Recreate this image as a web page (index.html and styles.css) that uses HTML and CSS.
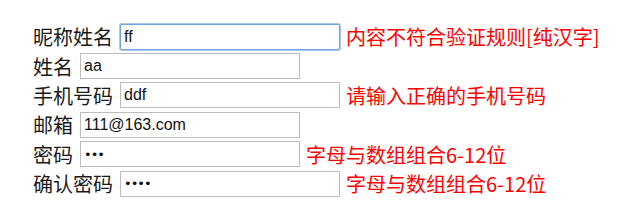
FILE: index.html
```html
<!doctype html>
<html lang="zh-CN">
  <head>
    <meta charset="UTF-8" />
    <title>注册表单</title>
    <link rel="stylesheet" href="styles.css">
  </head>
  <body>
    <form class="reg-form">
      <div class="row">
        <label for="nick">昵称姓名</label>
        <input type="text" id="nick" class="focused" value="ff" />
        <span class="err">内容不符合验证规则[纯汉字]</span>
      </div>
      <div class="row">
        <label for="name">姓名</label>
        <input type="text" id="name" value="aa" />
      </div>
      <div class="row">
        <label for="phone">手机号码</label>
        <input type="text" id="phone" value="ddf" />
        <span class="err">请输入正确的手机号码</span>
      </div>
      <div class="row">
        <label for="mail">邮箱</label>
        <input type="text" id="mail" value="111@163.com" />
      </div>
      <div class="row">
        <label for="pwd">密码</label>
        <input type="password" id="pwd" value="abc" />
        <span class="err">字母与数组组合6-12位</span>
      </div>
      <div class="row">
        <label for="pwd2">确认密码</label>
        <input type="password" id="pwd2" value="abcd" />
        <span class="err">字母与数组组合6-12位</span>
      </div>
    </form>
  </body>
</html>
```

FILE: styles.css
```css
body {
  margin: 0;
  background-color: #fff;
  font-family: "Noto Sans CJK SC", "Liberation Sans", sans-serif;
  color: #1a1a1a;
}

.reg-form {
  padding: 22px 0 0 33px;
}

.row {
  display: flex;
  align-items: center;
  height: 29.4px;
  font-size: 20px;
}

.row label {
  margin-right: 7px;
}

.row input {
  box-sizing: border-box;
  width: 220px;
  height: 26px;
  margin: 0;
  padding: 0 3px;
  border: 1px solid #bdbdbd;
  font-family: "Liberation Sans", Arial, sans-serif;
  font-size: 16px;
  color: #111;
  outline: none;
}

.row input.focused {
  border: 1px solid #6fa3dc;
  border-radius: 2px;
  box-shadow: 0 0 0 1px #a8c8ee;
}

.row input[type="password"] {
  font-family: "DejaVu Sans", sans-serif;
  font-size: 13px;
  letter-spacing: -1px;
}

.err {
  margin-left: 6px;
  color: #ff0000;
}
```
